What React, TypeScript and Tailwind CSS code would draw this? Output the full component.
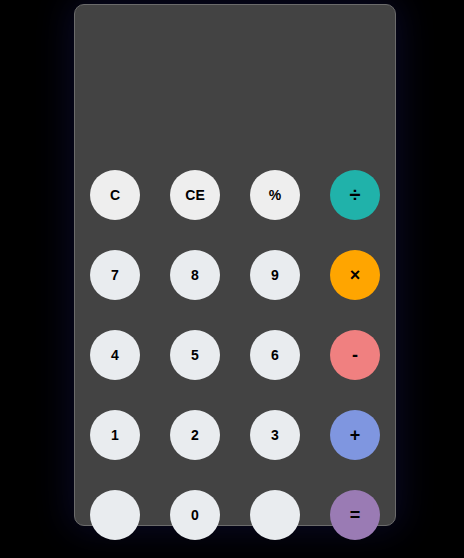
import React from "react";

type B = { label: string; cls: string };

const light = "bg-[#e9ecef]";
const top = "bg-[#eeeeee]";

const rows: B[][] = [
  [
    { label: "C", cls: top },
    { label: "CE", cls: top },
    { label: "%", cls: top },
    { label: "÷", cls: "bg-[#20b2aa] text-[20px]" },
  ],
  [
    { label: "7", cls: light },
    { label: "8", cls: light },
    { label: "9", cls: light },
    { label: "×", cls: "bg-[#ffa500] text-[18px]" },
  ],
  [
    { label: "4", cls: light },
    { label: "5", cls: light },
    { label: "6", cls: light },
    { label: "-", cls: "bg-[#f08080] text-[18px]" },
  ],
  [
    { label: "1", cls: light },
    { label: "2", cls: light },
    { label: "3", cls: light },
    { label: "+", cls: "bg-[#7f96e0] text-[18px]" },
  ],
  [
    { label: "", cls: light },
    { label: "0", cls: light },
    { label: "", cls: light },
    { label: "=", cls: "bg-[#9a7bb4] text-[18px]" },
  ],
];

export default function App() {
  return (
    <div
      className="w-[464px] h-[558px] bg-black overflow-hidden"
      style={{ fontFamily: '"Liberation Sans", Arial, sans-serif' }}
    >
      <div className="ml-[74px] mt-[4px] w-[322px] h-[522px] rounded-[10px] border border-[#6b6b6b] bg-[#434343] shadow-[0_0_36px_4px_rgba(10,10,45,0.85)] px-[15px]">
        <div className="h-[165px]" />
        <div className="flex flex-col gap-[30px]">
          {rows.map((r, i) => (
            <div key={i} className="flex gap-[30px]">
              {r.map((b, j) => (
                <div
                  key={j}
                  className={`w-[50px] h-[50px] rounded-full flex items-center justify-center font-bold text-[14px] text-black ${b.cls}`}
                >
                  {b.label}
                </div>
              ))}
            </div>
          ))}
        </div>
      </div>
    </div>
  );
}
